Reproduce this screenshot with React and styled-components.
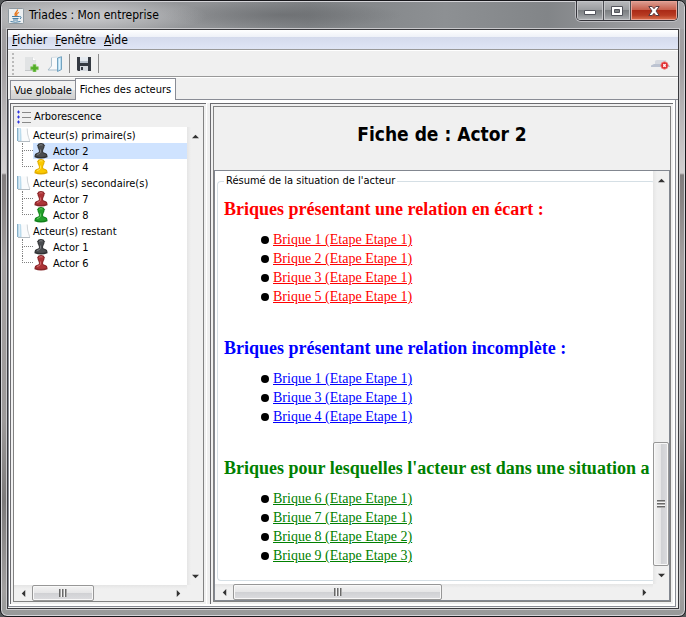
import React from "react";
import styled, { createGlobalStyle } from "styled-components";

const UI = '"DejaVu Sans Condensed", "DejaVu Sans", sans-serif';

const GlobalStyle = createGlobalStyle`
  *, *::before, *::after { box-sizing: border-box; }
  html, body { margin: 0; height: 100%; background: #55585a; }
  button { font: inherit; color: inherit; margin: 0; padding: 0; border: 0; background: none; }
  ul { list-style: none; margin: 0; padding: 0; }
`;

const Window = styled.div`
  display: flex;
  flex-direction: column;
  height: 100vh;
  overflow: hidden;
  padding: 0 6px 7px 6px;
  border: 1px solid #17171b;
  border-radius: 7px;
  box-shadow: inset 0 0 0 1px #d4d4d8;
  background: linear-gradient(180deg, #a3a3a6 0, #a09d9f 60px, #d2cfd0 172px, #817d7e 174px, #8a8585 200px, #a5a1a1 260px, #9d9a9a 420px, #7c7a7a 500px, #a2a0a0 590px, #979999 100%);
  font: 11px/16px ${UI};
  color: #000;
`;

const TitleBar = styled.header`
  display: flex;
  align-items: center;
  height: 27px;
  flex: none;
  margin: 1px -5px 0;
  padding-left: 6px;
  border-radius: 5px 5px 0 0;
  background:
    radial-gradient(ellipse 120px 20px at 85px 14px, rgba(235, 235, 238, 0.6), transparent),
    radial-gradient(ellipse 120px 14px at 280px 13px, rgba(82, 84, 87, 0.4), transparent),
    linear-gradient(90deg, #a5a6a8 0, #929497 28%, #7f8285 45%, #8d9093 65%, #828588 80%, #a7a7aa 100%);
`;

const WindowTitle = styled.h1`
  flex: 1;
  margin: 0 0 0 5px;
  padding-bottom: 2px;
  font: 12px/20px ${UI};
  white-space: nowrap;
`;

const Captions = styled.div`
  display: flex;
  align-self: flex-start;
  height: 20px;
  margin: -1px 6px 0 0;
  border: 1px solid #34343a;
  border-top: 0;
  border-radius: 0 0 5px 5px;
  overflow: hidden;
  box-shadow: 0 0 0 1px #bfbfc3;
`;

const CaptionButton = styled.button`
  display: grid;
  place-items: center;
  width: ${(p) => (p.$close ? 46 : 27)}px;
  border-right: ${(p) => (p.$close ? 0 : 1)}px solid #4c4d52;
  box-shadow: inset 0 0 0 1px ${(p) => (p.$close ? "#e9a295" : "#c5c6c9")};
  background: ${(p) =>
    p.$close
      ? "linear-gradient(180deg, #dda095 0, #c8614e 45%, #ab2a17 50%, #b73a22 75%, #dc7351 100%)"
      : "linear-gradient(180deg, #b9babd 0, #9c9ea1 45%, #7c7f82 50%, #8f9295 75%, #b1b3b6 100%)"};
`;

const Client = styled.main`
  display: flex;
  flex-direction: column;
  flex: 1;
  min-height: 0;
  border: 1px solid #39393d;
  outline: 1px solid #c9c9cc;
  background: #f0f0f0;
`;

const MenuBar = styled.nav`
  display: flex;
  flex: none;
  gap: 8px;
  height: 20px;
  padding-left: 4px;
  border-bottom: 1px solid #999;
  background: linear-gradient(180deg, #fff 0, #eef1f8 7px, #d4daec 7px, #dfe5f5 100%);
`;

const MenuButton = styled.button`
  font-size: 12px;
  line-height: 20px;
  &::first-letter { text-decoration: underline; }
`;

const ToolBar = styled.div`
  display: flex;
  align-items: center;
  flex: none;
  gap: 4px;
  height: 27px;
  padding: 0 7px 0 4px;
  border-top: 1px solid #fff;
  border-bottom: 1px solid #999;
`;

const Grip = styled.span`
  width: 2px;
  height: 22px;
  margin-right: 3px;
  background: repeating-linear-gradient(180deg, #bababa 0 2px, transparent 2px 4px);
`;

const Separator = styled.span`
  width: 1px;
  height: 19px;
  background: #8c8c8c;
`;

const ToolButton = styled.button`
  display: grid;
  place-items: center;
  width: 20px;
  height: 20px;
  margin-left: ${(p) => (p.$end ? "auto" : 0)};
`;

const TabBar = styled.div`
  display: flex;
  align-items: flex-end;
  flex: none;
  height: 23px;
  padding-left: 2px;
  border-top: 1px solid #fff;
  border-bottom: 1px solid #898c95;
`;

const Tab = styled.button`
  height: ${(p) => (p.$active ? 22 : 19)}px;
  margin-bottom: ${(p) => (p.$active ? -1 : 0)}px;
  padding: ${(p) => (p.$active ? "0 4px" : "2px 3px 0")};
  border: 1px solid #898c95;
  border-bottom: 0;
  border-right-width: ${(p) => (p.$active ? 1 : 0)}px;
  background: ${(p) => (p.$active ? "#fff" : "linear-gradient(180deg, #f2f2f2 0 50%, #dfdfdf 50%, #d0d0d0)")};
  white-space: nowrap;
`;

const TabPanel = styled.div`
  display: flex;
  flex: 1;
  min-height: 0;
  margin: 0 2px 1px 0;
  padding: 3px 2px 2px 1px;
  border: 1px solid #898c95;
  border-width: 0 1px 1px 1px;
  background: #fff;
`;

const Pane = styled.section`
  display: flex;
  flex: ${(p) => (p.$side ? "0 1 196px" : "1 1 0")};
  min-width: 0;
  padding: 2px;
  border: 1px solid #6b6b6f;
  border-width: 1px 0 0 1px;
  background: #f0f0f0;
`;

const Divider = styled.div`
  flex: 0 0 4px;
  border-left: 1px solid #fff;
  background: #f0f0f0;
`;

const Frame = styled.div`
  display: flex;
  flex-direction: column;
  flex: 1;
  min-width: 0;
  border: 1px solid #828282;
`;

const TreeHeader = styled.h2`
  display: flex;
  align-items: center;
  flex: none;
  gap: 3px;
  height: 20px;
  margin: 0;
  padding-left: 3px;
  font: inherit;
  line-height: 18px;
`;

const ScrollArea = styled.div`
  display: grid;
  grid-template: minmax(0, 1fr) 16px / minmax(0, 1fr) 16px;
  flex: 1;
  min-height: 0;
  border: ${(p) => (p.$bordered ? "solid #828790" : "none")};
  border-width: 1px;
`;

const Viewport = styled.div`
  overflow: hidden;
  background: #fff;
`;

const Tree = styled.ul`
  line-height: 18px;
  white-space: nowrap;
`;

const TreeGroup = styled.div`
  display: flex;
  align-items: flex-start;
  gap: 2px;
  height: 16px;
  padding-left: 3px;
`;

const TreeItem = styled.li`
  display: flex;
  height: 16px;
  padding-left: 8px;
  &::before {
    content: "";
    width: 11px;
    height: 8px;
    border: dotted #808080;
    border-width: 0 0 1px 1px;
  }
  &:not(:last-child) {
    background: repeating-linear-gradient(180deg, #808080 0 1px, transparent 1px 2px) 8px 8px / 1px 8px no-repeat;
  }
`;

const TreeLeaf = styled.button`
  display: flex;
  align-items: flex-start;
  flex: 1;
  gap: 5px;
  padding-left: 1px;
  background: ${(p) => (p.$selected ? "#cfe3ff" : "none")};
`;

const Bar = styled.div`
  display: flex;
  flex-direction: ${(p) => (p.$vertical ? "column" : "row")};
  min-width: 0;
  min-height: 0;
  background: ${(p) => (p.$vertical ? "linear-gradient(90deg, #e5e5e5, #f0f0f0 4px)" : "linear-gradient(180deg, #e5e5e5, #f0f0f0 4px)")};
`;

const ArrowButton = styled.button`
  display: grid;
  place-items: center;
  flex: 0 0 18px;
`;

const Track = styled.div`
  display: flex;
  flex-direction: ${(p) => (p.$vertical ? "column" : "row")};
  justify-content: ${(p) => (p.$end ? "flex-end" : "flex-start")};
  flex: 1;
  min-height: 0;
`;

const Thumb = styled.div`
  display: grid;
  place-items: center;
  flex: 0 0 ${(p) => p.$size}%;
  border: 1px solid #979797;
  border-radius: 2px;
  box-shadow: inset 0 0 0 1px #f8f8f8;
  background: linear-gradient(${(p) => (p.$vertical ? "90deg" : "180deg")}, #f3f3f3 0, #e6e6e7 48%, #d0d1d4 52%, #dcdcdf 100%);
  &::after {
    content: "";
    width: 8px;
    height: 8px;
    background: repeating-linear-gradient(${(p) => (p.$vertical ? "180deg" : "90deg")}, #696969 0 1px, #aaa 1px 2px, #f5f5f5 2px 3px);
  }
`;

const SheetHeading = styled.h2`
  display: grid;
  place-items: center;
  flex: none;
  height: 63px;
  margin: 0;
  padding-bottom: 9px;
  font: bold 19px/24px ${UI};
`;

const Summary = styled.fieldset`
  min-width: 100%;
  width: max-content;
  height: calc(100% - 5px);
  margin: 2px 0 0 2px;
  padding: 0 0 0 6px;
  border: 1px solid #d5dfe5;
  border-right: 0;
  border-radius: 4px;
  white-space: nowrap;
`;

const Legend = styled.legend`
  padding: 0 2px;
`;

const Block = styled.section`
  padding-top: 8px;
  margin-bottom: 22px;
  font-family: "Liberation Serif", "Times New Roman", serif;
  color: ${(p) => p.$color};
`;

const BlockTitle = styled.h3`
  margin: 0 0 9px;
  font-size: 18px;
  line-height: 24px;
`;

const BrickItem = styled.li`
  display: flex;
  align-items: center;
  gap: 4px;
  height: 19px;
  padding-left: 37px;
  &::before {
    content: "";
    width: 8px;
    height: 8px;
    border-radius: 4px;
    background: #000;
  }
`;

const BrickLink = styled.a`
  font-size: 14px;
  line-height: 19px;
  color: inherit;
`;

const arrows = {
  up: "M4 2 8 6H0Z",
  down: "M0 2H8L4 6Z",
  left: "M2 4 6 0V8Z",
  right: "M2 0 6 4 2 8Z",
};

const Arrow = ({ dir }) => (
  <ArrowButton aria-label={dir}>
    <svg width="7" height="7" viewBox="0 0 8 8"><path d={arrows[dir]} fill="#333" /></svg>
  </ArrowButton>
);

const ScrollBar = ({ vertical, size, end }) => (
  <Bar $vertical={vertical}>
    <Arrow dir={vertical ? "up" : "left"} />
    <Track $vertical={vertical} $end={end}>
      {size && <Thumb $vertical={vertical} $size={size} />}
    </Track>
    <Arrow dir={vertical ? "down" : "right"} />
  </Bar>
);

const JavaIcon = () => (
  <svg width="16" height="16" viewBox="0 0 16 16">
    <rect x=".5" y=".5" width="15" height="15" rx="1" fill="#edf0f2" stroke="#8d989f" />
    <path d="M9.500 1.500C10 4 5.500 4.500 7.500 8M11 4.500C8 5.500 8.500 6.500 9 8" fill="none" stroke="#e87518" strokeWidth="1.300" />
    <path d="M4 8.500h7.500M4.500 10.500h6M5 12h5M2.500 13.500q5 1.500 10 0M11.500 8.500q3 0 .5 2.500" fill="none" stroke="#487fa5" />
  </svg>
);

const FolderIcon = () => (
  <svg width="14" height="16" viewBox="0 0 14 16">
    <path d="M3.500 1.500H10q.3 6.500 1.500 9l1.500 4H3.500Z" fill="#fafbfc" />
    <path d="M10.200 1.500q.2 6.500 1.400 9l1.200 3.500" stroke="#c3c9ce" strokeWidth=".8" fill="none" />
    <path d="M.5 1 4 1.200Q4.500 8 4.500 14H.5Z" fill="#b5d6e9" />
    <path d="M.5 1v13" stroke="#86aec6" />
    <path d="M2.500 1.500v12" stroke="#dcedf8" strokeWidth="1.400" />
    <path d="M1 14.500h12" stroke="#b4bcc2" fill="none" />
  </svg>
);

const Pawn = ({ tone }) => {
  const [fill, dark, light] = {
    black: ["#4b4d50", "#303133", "#85888b"],
    yellow: ["#fbc900", "#dfaa00", "#ffe66a"],
    red: ["#ad3437", "#862528", "#d67779"],
    green: ["#24a02b", "#10801a", "#72d372"],
  }[tone];
  return (
    <svg width="14" height="16" viewBox="0 0 14 16">
      <path d="M4.600 6h4.800L9 8.500q.2 1 2.300 1.500 2.200.7 2.200 3v1.300q-6.500 2.600-13 0V13q0-2.300 2.200-3Q4.800 9.500 5 8.500Z" fill={dark} />
      <path d="M3.300 2.300Q4 0 7 0t3.700 2.300Q10.500 4.800 9.300 6.500H4.700Q3.500 4.800 3.300 2.300Z" fill={dark} />
      <path d="M4.200 2.500Q4.800.9 7 .9t2.800 1.600Q9.600 4.500 8.500 6.300L8.200 9q.5 1.500 2.800 2 1.500.5 1.500 2-5.500 2-11 0 0-1.500 1.500-2 2.300-.5 2.800-2L5.500 6.300Q4.400 4.500 4.200 2.500Z" fill={fill} />
      <path d="M5.300 2.300q1.500-1 3.200-.3M6.400 6.500v3q-1 1.500-3.400 2" fill="none" stroke={light} strokeWidth=".9" />
    </svg>
  );
};

const NewIcon = () => (
  <svg width="16" height="16" viewBox="0 0 16 16">
    <path d="M2 1h7.500L13 4.500V15H2Z" fill="#e1e3e4" />
    <path d="M9.500 1v3.500H13" fill="#fff" stroke="#cfd2d4" strokeWidth=".6" />
    <path d="M2 14.500h10" stroke="#c5c8ca" />
    <path d="M10 8.500h3v2.200h2.300v3H13v2.200h-3v-2.200H7.700v-3H10Z" fill="#52ad28" stroke="#8fcb6d" strokeWidth=".7" />
  </svg>
);

const OpenIcon = () => (
  <svg width="16" height="16" viewBox="0 0 16 16">
    <path d="M4 1h7v13H2.500L4 10Z" fill="#f9fafb" />
    <path d="M4.500 1.500V10L1 14h9" fill="none" stroke="#a3bac9" strokeWidth=".9" />
    <path d="M4.500 1.500 10.500 1" stroke="#cfd8de" strokeWidth=".8" />
    <path d="M10.500 2 14.500.7v12.800L10.500 15.500Z" fill="#b3daf0" stroke="#5b91b3" strokeWidth=".8" />
    <path d="M12.500 2.500v11" stroke="#e4f6ff" strokeWidth="1.300" />
  </svg>
);

const SaveIcon = () => (
  <svg width="16" height="16" viewBox="0 0 16 16">
    <path d="M1 1h14v14H2L1 14Z" fill="#343941" />
    <path d="M4 1h8v6H4Z" fill="#e5eaf0" />
    <path d="M4 5h8v2H4Z" fill="#b8c1cc" />
    <path d="M4 10h8v5H4Z" fill="#d5d9df" />
    <path d="M5 11h2v3H5Z" fill="#343941" />
  </svg>
);

const DisconnectIcon = () => (
  <svg width="20" height="16" viewBox="0 0 20 16">
    <path d="M4 5.500Q4 4 6 4h9l1 4H4Z" fill="#d7dae0" />
    <path d="M0 9.500 3 8h13l3 2v1H0Z" fill="#bcc3d1" />
    <circle cx="13.500" cy="9.500" r="3.700" fill="#e02e32" stroke="#ef8684" strokeWidth=".8" />
    <path d="m12.300 8.300 2.400 2.400m0-2.400-2.400 2.400" stroke="#fff" strokeWidth="1.300" />
  </svg>
);

const ListIcon = () => (
  <svg width="14" height="14" viewBox="0 0 14 14">
    <path d="M0 2h3M0 7h3M0 12h3" stroke="#3036e0" />
    <path d="M1.500 .5v3M1.500 5.500v3M1.500 10.500v3" stroke="#3036e0" />
    <path d="M5 2.500h9M5 7.500h9M5 12.500h9" stroke="#888" />
  </svg>
);

const groups = [
  { name: "Acteur(s) primaire(s)", actors: [["Actor 2", "black", true], ["Actor 4", "yellow"]] },
  { name: "Acteur(s) secondaire(s)", actors: [["Actor 7", "red"], ["Actor 8", "green"]] },
  { name: "Acteur(s) restant", actors: [["Actor 1", "black"], ["Actor 6", "red"]] },
];

const blocks = [
  {
    color: "#ff0000",
    title: "Briques présentant une relation en écart :",
    bricks: ["Brique 1 (Etape Etape 1)", "Brique 2 (Etape Etape 1)", "Brique 3 (Etape Etape 1)", "Brique 5 (Etape Etape 1)"],
  },
  {
    color: "#0000ff",
    title: "Briques présentant une relation incomplète :",
    bricks: ["Brique 1 (Etape Etape 1)", "Brique 3 (Etape Etape 1)", "Brique 4 (Etape Etape 1)"],
  },
  {
    color: "#008000",
    title: "Briques pour lesquelles l'acteur est dans une situation a",
    bricks: ["Brique 6 (Etape Etape 1)", "Brique 7 (Etape Etape 1)", "Brique 8 (Etape Etape 2)", "Brique 9 (Etape Etape 3)"],
  },
];

export default function App() {
  return (
    <>
      <GlobalStyle />
      <Window>
        <TitleBar>
          <JavaIcon />
          <WindowTitle>Triades : Mon entreprise</WindowTitle>
          <Captions>
            <CaptionButton aria-label="Réduire">
              <svg width="12" height="12"><path d="M.5 5.500h11v4H.5Z" fill="#fff" stroke="#53545c" /></svg>
            </CaptionButton>
            <CaptionButton aria-label="Agrandir">
              <svg width="12" height="12"><path fillRule="evenodd" d="M.5 1.500h11v9H.5ZM3.500 4.500v3h5v-3Z" fill="#fff" stroke="#53545c" /></svg>
            </CaptionButton>
            <CaptionButton $close aria-label="Fermer">
              <svg width="12" height="12"><path d="M.8 1.500h3.400L6 3.700l1.800-2.200h3.400L8 6l3.200 4.500H7.800L6 8.300l-1.800 2.200H.8L4 6Z" fill="#fff" stroke="#563b42" /></svg>
            </CaptionButton>
          </Captions>
        </TitleBar>
        <Client>
          <MenuBar>
            <MenuButton>Fichier</MenuButton>
            <MenuButton>Fenêtre</MenuButton>
            <MenuButton>Aide</MenuButton>
          </MenuBar>
          <ToolBar>
            <Grip />
            <ToolButton aria-label="Nouveau"><NewIcon /></ToolButton>
            <ToolButton aria-label="Ouvrir"><OpenIcon /></ToolButton>
            <Separator />
            <ToolButton aria-label="Enregistrer"><SaveIcon /></ToolButton>
            <Separator />
            <ToolButton $end aria-label="Déconnecter"><DisconnectIcon /></ToolButton>
          </ToolBar>
          <TabBar role="tablist">
            <Tab role="tab" aria-selected="false">Vue globale</Tab>
            <Tab role="tab" aria-selected="true" $active>Fiches des acteurs</Tab>
          </TabBar>
          <TabPanel role="tabpanel">
            <Pane $side>
              <Frame>
                <TreeHeader><ListIcon />Arborescence</TreeHeader>
                <ScrollArea>
                  <Viewport>
                    <Tree>
                      {groups.map((g) => (
                        <li key={g.name}>
                          <TreeGroup><FolderIcon />{g.name}</TreeGroup>
                          <ul>
                            {g.actors.map(([name, tone, selected]) => (
                              <TreeItem key={name}>
                                <TreeLeaf $selected={selected}><Pawn tone={tone} />{name}</TreeLeaf>
                              </TreeItem>
                            ))}
                          </ul>
                        </li>
                      ))}
                    </Tree>
                  </Viewport>
                  <ScrollBar vertical />
                  <ScrollBar size={45} />
                </ScrollArea>
              </Frame>
            </Pane>
            <Divider />
            <Pane>
              <Frame>
                <SheetHeading>Fiche de : Actor 2</SheetHeading>
                <ScrollArea $bordered>
                  <Viewport>
                    <Summary>
                      <Legend>Résumé de la situation de l'acteur</Legend>
                      {blocks.map((b) => (
                        <Block key={b.title} $color={b.color}>
                          <BlockTitle>{b.title}</BlockTitle>
                          <ul>
                            {b.bricks.map((text) => (
                              <BrickItem key={text}><BrickLink href="#">{text}</BrickLink></BrickItem>
                            ))}
                          </ul>
                        </Block>
                      ))}
                    </Summary>
                  </Viewport>
                  <ScrollBar vertical size={33} end />
                  <ScrollBar size={52} />
                </ScrollArea>
              </Frame>
            </Pane>
          </TabPanel>
        </Client>
      </Window>
    </>
  );
}
